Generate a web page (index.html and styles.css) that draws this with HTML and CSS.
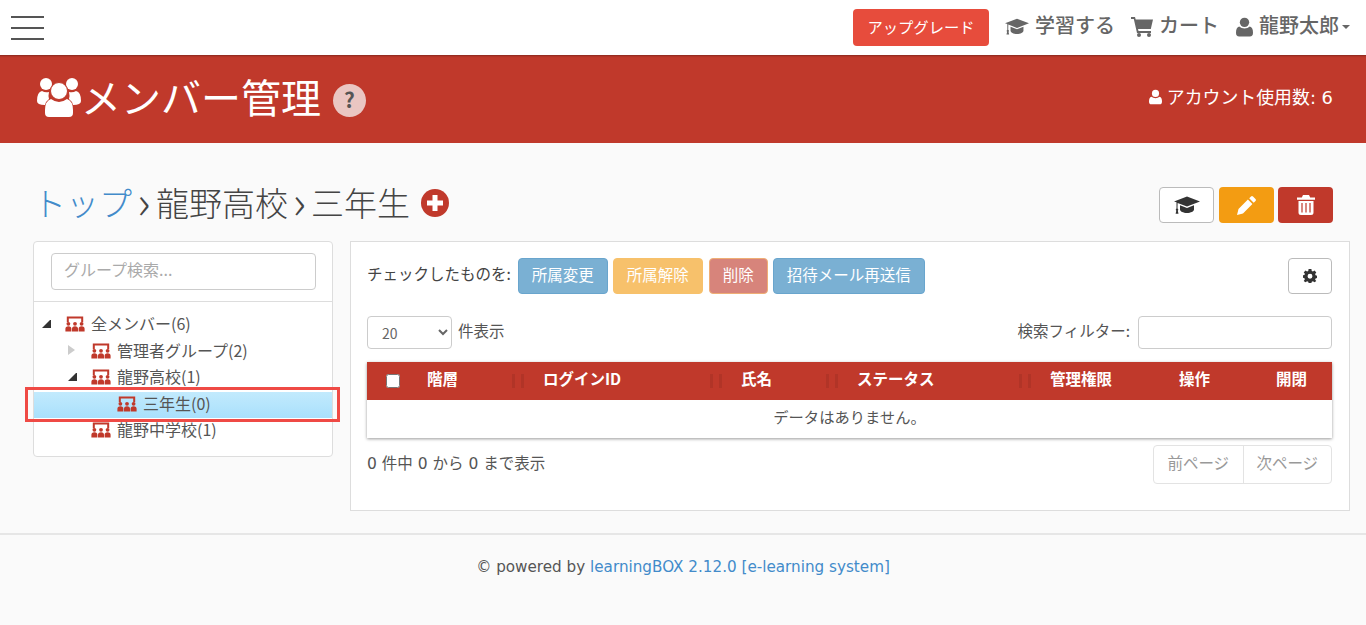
FILE: index.html
```html
<!DOCTYPE html>
<html lang="ja">
  <head>
    <meta charset="UTF-8" />
    <title>メンバー管理</title>
    <link rel="stylesheet" href="styles.css">
  </head>
  <body>
    <svg class="defs" width="0" height="0">
      <symbol id="i-group" viewBox="0 0 20 16">
        <path d="M1.800 6.200V.6h16.400v5.600h-2V2.600H3.800v3.600z" fill="currentColor"/>
        <g fill="currentColor">
          <circle cx="3.400" cy="7.800" r="1.900"/><circle cx="10" cy="7.800" r="1.900"/><circle cx="16.600" cy="7.800" r="1.900"/>
          <path d="M.4 15.600v-2.800q0-2.600 3-2.600t3 2.600v2.800zM7 15.600v-2.800q0-2.600 3-2.600t3 2.600v2.800zM13.600 15.600v-2.800q0-2.600 3-2.600t3 2.600v2.800z"/>
        </g>
      </symbol>
      <symbol id="i-cap" viewBox="0 0 26 18">
        <path d="M13 .5 26 5.500 13 10.500 3.600 6.900l-.1 5.600c.5.3.8.8.8 1.300 0 .4-.2.8-.5 1l.7 3H1.600l.7-3c-.3-.2-.5-.6-.5-1 0-.5.3-1 .7-1.300V6.300L0 5.500z" fill="currentColor"/>
        <path d="M6 9.300 13 12l7-2.700v4.200c0 1.800-3.200 3.500-7 3.500s-7-1.700-7-3.500z" fill="currentColor"/>
      </symbol>
      <symbol id="i-user" viewBox="0 0 16 18">
        <circle cx="8" cy="4.600" r="4.400" fill="currentColor"/>
        <path d="M3 8.600Q5 10.400 8 10.400T13 8.600Q16 9.300 16 14.500 16 18 13 18H3Q0 18 0 14.500 0 9.300 3 8.600z" fill="currentColor"/>
      </symbol>
    </svg>

    <header class="topbar">
      <div class="hamburger"><span></span><span></span><span></span></div>
      <nav class="topnav">
        <button class="upgrade">アップグレード</button>
        <a class="nav-item"><svg class="nav-cap"><use href="#i-cap"/></svg>学習する</a>
        <a class="nav-item">
          <svg class="nav-cart" viewBox="0 0 22 20"><path d="M0 0h4l.7 2.500H22l-2.200 9.500H7l.5 2H20v2H6L2.800 2H0z" fill="currentColor"/><circle cx="8" cy="18" r="2" fill="currentColor"/><circle cx="18" cy="18" r="2" fill="currentColor"/></svg>カート
        </a>
        <a class="nav-item"><svg class="nav-user"><use href="#i-user"/></svg>龍野太郎<i class="caret"></i></a>
      </nav>
    </header>

    <section class="page-head">
      <div class="page-title">
        <svg class="title-icon" viewBox="0 0 44 40">
          <g fill="#fff">
            <circle cx="9" cy="7" r="6"/><circle cx="35" cy="7" r="6"/>
            <path d="M0 24q0-9 5-10 3 2 7 1-1 4 0 7-3 2-4 6-8 0-8-4zM44 24q0-9-5-10-3 2-7 1 1 4 0 7 3 2 4 6 8 0 8-4z"/>
          </g>
          <circle cx="22" cy="14" r="8.500" fill="#fff" stroke="#c0392b"/>
          <path d="M14 22q4 3 8 3t8-3q6 2 6 11v3q0 4-4 4H12q-4 0-4-4v-3q0-9 6-11z" fill="#fff"/>
        </svg>
        <h1>メンバー管理</h1>
        <span class="help">?</span>
      </div>
      <div class="account-count">
        <svg class="count-icon"><use href="#i-user"/></svg>アカウント使用数: 6
      </div>
    </section>

    <main class="content">
      <div class="crumb-row">
        <div class="crumbs">
          <a class="crumb-link">トップ</a><span class="sep">›</span><span>龍野高校</span><span class="sep">›</span><span>三年生</span>
          <svg class="crumb-add" viewBox="0 0 28 28"><circle cx="14" cy="14" r="14" fill="#c0392b"/><path d="M11.500 6h5v5.500H22v5h-5.500V22h-5v-5.500H6v-5h5.500z" fill="#fff"/></svg>
        </div>
        <div class="crumb-actions">
          <button class="act act-white"><svg class="act-cap"><use href="#i-cap"/></svg></button>
          <button class="act act-orange">
            <svg class="act-icon" viewBox="0 0 20 20"><path d="M14 1.500q1-1 2 0l2.500 2.500q1 1 0 2l-1.800 1.800-4.500-4.500zM10.900 4.600l4.500 4.500L6 18.500 0 20l1.500-6z" fill="#fff"/></svg>
          </button>
          <button class="act act-red">
            <svg class="act-icon" viewBox="0 0 18 20"><path d="M6 0h6l1.200 2.500H18v2.300H0V2.500h4.800zM1.500 6h15v11.500q0 2.500-2.500 2.500H4q-2.500 0-2.500-2.500z" fill="#fff"/><path d="M5 8v9.500M9 8v9.500M13 8v9.500" stroke="#c0392b" stroke-width="1.200"/></svg>
          </button>
        </div>
      </div>

      <div class="columns">
        <aside class="tree-panel">
          <div class="tree-search">
            <input type="text" placeholder="グループ検索..." />
          </div>
          <ul class="tree">
            <li class="node lv0"><i class="tog open"></i><svg class="grp"><use href="#i-group"/></svg>全メンバー(6)</li>
            <li class="node lv1"><i class="tog closed"></i><svg class="grp"><use href="#i-group"/></svg>管理者グループ(2)</li>
            <li class="node lv1"><i class="tog open"></i><svg class="grp"><use href="#i-group"/></svg>龍野高校(1)</li>
            <li class="node lv2 selected"><i class="tog"></i><svg class="grp"><use href="#i-group"/></svg>三年生(0)<span class="callout"></span></li>
            <li class="node lv1"><i class="tog"></i><svg class="grp"><use href="#i-group"/></svg>龍野中学校(1)</li>
          </ul>
        </aside>

        <section class="list-panel">
          <div class="toolbar">
            <span class="toolbar-label">チェックしたものを:</span>
            <button class="btn blue">所属変更</button>
            <button class="btn orange">所属解除</button>
            <button class="btn red">削除</button>
            <button class="btn blue">招待メール再送信</button>
            <button class="btn-gear">
              <svg viewBox="0 0 20 20"><path fill-rule="evenodd" d="M8 0h4l.5 2.800 1.700.7L16.500 2 19 5l-1.700 2.200.6 1.700 2.100.6v3.500l-2.100.6-.6 1.700L19 17l-2.500 2-2.300-1.500-1.700.7-.5 1.800H8l-.5-1.800-1.700-.7L3.500 19 1 17l1.700-2.200-.6-1.700-2.100-.6V9l2.100-.6.6-1.700L1 5l2.500-3 2.300 1.500 1.700-.7zM10 6.800a3.500 3.500 0 1 0 0 7 3.500 3.500 0 0 0 0-7z" fill="#333"/></svg>
            </button>
          </div>

          <div class="filter-row">
            <label class="length">
              <select><option>20</option></select>
              件表示
            </label>
            <label class="filter">検索フィルター: <input type="text" /></label>
          </div>

          <div class="table-wrap">
            <table>
              <colgroup>
                <col class="c0"><col class="c1"><col class="c2"><col class="c3"><col class="c4"><col class="c5"><col class="c6"><col class="c7">
              </colgroup>
              <thead>
                <tr>
                  <th class="check"><input type="checkbox" /></th>
                  <th class="sort">階層</th>
                  <th class="sort">ログインID</th>
                  <th class="sort">氏名</th>
                  <th class="sort">ステータス</th>
                  <th>管理権限</th>
                  <th>操作</th>
                  <th>開閉</th>
                </tr>
              </thead>
              <tbody>
                <tr><td colspan="8">データはありません。</td></tr>
              </tbody>
            </table>
          </div>

          <div class="table-foot">
            <span class="info">0 件中 0 から 0 まで表示</span>
            <div class="pager"><a>前ページ</a><a>次ページ</a></div>
          </div>
        </section>
      </div>
    </main>

    <footer class="footer">
      © powered by <a>learningBOX 2.12.0 [e-learning system]</a>
    </footer>
  </body>
</html>
```

FILE: styles.css
```css
* {
  box-sizing: border-box;
}
html,
body {
  height: 625px;
  overflow: hidden;
}
body {
  margin: 0;
  font-family: "Noto Sans CJK JP", sans-serif;
  font-size: 15.500px;
  color: #555;
  background-color: #fafafa;
}
button {
  font-family: inherit;
}
.defs {
  position: absolute;
}
.topbar {
  height: 55px;
  background: #fff;
  display: flex;
  align-items: center;
  justify-content: space-between;
  padding: 0 16px 0 11px;
}
.hamburger {
  width: 33px;
  display: flex;
  flex-direction: column;
  gap: 9px;
}
.hamburger span {
  height: 2px;
  background: #555;
}
.topnav {
  display: flex;
  align-items: center;
}
.upgrade {
  width: 136px;
  height: 37px;
  margin-right: 16px;
  background: #e74c3c;
  border: none;
  border-radius: 4px;
  color: #fff;
  font-size: 15.300px;
  padding: 0 0 3px;
}
.nav-item {
  display: flex;
  align-items: center;
  color: #666;
  font-size: 20px;
  font-weight: 500;
  line-height: 30px;
  padding-bottom: 6px;
  margin-right: 17px;
}
.nav-item:last-child {
  margin-right: 0;
}
.upgrade + .nav-item {
  margin-right: 16px;
}
.nav-item svg {
  margin-top: 4px;
}
.nav-cap {
  width: 24px;
  height: 17px;
  margin-right: 6px;
}
.nav-cart {
  width: 22px;
  height: 20px;
  margin-right: 6px;
}
.nav-user {
  width: 17px;
  height: 20px;
  margin-right: 6px;
}
.caret {
  border-top: 4px solid #666;
  border-left: 4.500px solid transparent;
  border-right: 4.500px solid transparent;
  margin: 4px 0 0 3px;
}
.page-head {
  height: 88px;
  background: #c0392b;
  box-shadow: inset 0 3px 2px -2px rgba(0, 0, 0, 0.3);
  color: #fff;
  display: flex;
  align-items: center;
  justify-content: space-between;
  padding: 0 33px 4px 37px;
}
.page-title {
  display: flex;
  align-items: center;
}
.title-icon {
  width: 44px;
  height: 40px;
}
h1 {
  margin: 0;
  font-size: 40px;
  font-weight: 400;
  line-height: 50px;
  padding-bottom: 2px;
}
.help {
  width: 33px;
  height: 33px;
  margin: 6px 0 0 12px;
  border-radius: 50%;
  background: #eac6c2;
  color: #555;
  font-size: 21px;
  font-weight: 700;
  text-align: center;
  line-height: 31px;
}
.account-count {
  display: flex;
  align-items: center;
  font-family: "DejaVu Sans", "Noto Sans CJK JP", sans-serif;
  font-size: 17.900px;
  padding-bottom: 2px;
}
.count-icon {
  width: 13px;
  height: 16px;
  margin: 2px 5px 0 0;
  color: #fff;
}
.content {
  height: 392px;
  border-bottom: 2px solid #e6e6e6;
  padding: 44px 16px 0 33px;
}
.crumb-row {
  display: flex;
  align-items: center;
  justify-content: space-between;
  height: 36px;
  margin-bottom: 18px;
}
.crumbs {
  display: flex;
  align-items: center;
  font-size: 33px;
  line-height: 36px;
  font-weight: 300;
  color: #444;
  padding-bottom: 6px;
}
.crumb-link {
  color: #428bca;
}
.sep {
  width: 24px;
  text-align: center;
  font-size: 46px;
  padding-bottom: 6px;
}
.sep + span + .sep {
  width: 23px;
}
.crumb-add {
  width: 28px;
  height: 28px;
  margin-left: 11px;
  margin-top: 2px;
}
.crumb-actions {
  display: flex;
  gap: 4px;
  margin-right: 17px;
}
.act {
  width: 55px;
  height: 36px;
  border-radius: 4px;
  border: 1px solid transparent;
  display: flex;
  align-items: center;
  justify-content: center;
  padding: 0;
}
.act-white {
  background: #fff;
  border-color: #bbb;
  color: #333;
  margin-right: 1px;
}
.act-orange {
  background: #f39c12;
}
.act-red {
  background: #c0392b;
}
.act-cap {
  width: 26px;
  height: 18px;
}
.act-icon {
  width: 20px;
  height: 20px;
}
.columns {
  display: flex;
  align-items: flex-start;
  gap: 17px;
}
.tree-panel {
  width: 300px;
  height: 216px;
  background: #fff;
  border: 1px solid #ddd;
  border-radius: 4px;
}
.tree-search {
  height: 60px;
  padding: 11px 16px 0 17px;
  border-bottom: 1px solid #ddd;
}
.tree-search input {
  width: 100%;
  height: 37px;
  border: 1px solid #ccc;
  border-radius: 4px;
  padding: 0 12px 5px;
  font-family: inherit;
  font-size: 16px;
}
.tree-search input::placeholder {
  color: #aaa;
}
.tree {
  list-style: none;
  margin: 0;
  padding: 10px 0 0;
}
.node {
  position: relative;
  height: 26.500px;
  display: flex;
  align-items: center;
  font-size: 16px;
  color: #555;
  white-space: nowrap;
  padding-bottom: 4px;
}
.lv0 {
  padding-left: 8px;
}
.lv1 {
  padding-left: 34px;
}
.lv2 {
  padding-left: 60px;
}
.tog {
  width: 9px;
  height: 9px;
  margin-right: 14px;
  flex: none;
}
.tog.open {
  border-style: solid;
  border-width: 0 0 8px 8px;
  border-color: transparent transparent #333 transparent;
}
.tog.closed {
  border-style: solid;
  border-width: 5px 0 5px 7px;
  border-color: transparent transparent transparent #ccc;
}
.grp {
  width: 20px;
  height: 16px;
  margin: 2px 6px 0 0;
  color: #c0392b;
  flex: none;
}
.selected {
  background: linear-gradient(#c2eafd, #a9e0fc);
}
.callout {
  position: absolute;
  left: -9px;
  right: -8px;
  top: -5px;
  bottom: -4px;
  border: 3px solid #ef4a45;
}
.list-panel {
  width: 1000px;
  height: 270px;
  background: #fff;
  border: 1px solid #ddd;
  padding: 16px 17px 0 16px;
}
.toolbar {
  display: flex;
  align-items: center;
  height: 36px;
}
.toolbar-label {
  margin-right: 7px;
  font-size: 15.500px;
  color: #444;
  padding-bottom: 6px;
}
.btn {
  height: 36px;
  padding: 0 13px 5px;
  margin-right: 5px;
  border-radius: 4px;
  border: 1px solid;
  color: #fff;
  font-size: 15.500px;
  opacity: 0.62;
}
.btn.blue {
  background: #2980b9;
  border-color: #0e6fb0;
}
.btn.orange {
  background: #f39c12;
  border-color: #f39c12;
}
.btn.red {
  background: #c0392b;
  border-color: #e67e22;
  margin-left: 1px;
}
.btn-gear {
  width: 44px;
  height: 36px;
  margin-left: auto;
  background: #fff;
  border: 1px solid #bbb;
  border-radius: 4px;
  display: flex;
  align-items: center;
  justify-content: center;
  padding: 0;
}
.btn-gear svg {
  width: 14px;
  height: 14px;
}
.filter-row {
  display: flex;
  justify-content: space-between;
  align-items: center;
  height: 33px;
  margin-top: 22px;
}
.length,
.filter {
  display: flex;
  align-items: center;
  font-size: 15.500px;
  line-height: 26px;
  color: #555;
}
.length select {
  width: 85px;
  height: 33px;
  margin: 5px 6px 0 0;
  padding-left: 10px;
  background: #fff;
  border: 1px solid #ccc;
  border-radius: 4px;
  color: #666;
  font-family: inherit;
  font-size: 14px;
}
.filter input {
  width: 194px;
  height: 33px;
  margin: 5px 0 0 8px;
  border: 1px solid #ccc;
  border-radius: 4px;
}
.filter-row label {
  padding-bottom: 5px;
}
.table-wrap {
  margin-top: 13px;
  box-shadow: 0 1px 3px rgba(0, 0, 0, 0.4);
}
table {
  width: 965px;
  table-layout: fixed;
  border-collapse: collapse;
}
.c0 { width: 45px; }
.c1 { width: 116px; }
.c2 { width: 198px; }
.c3 { width: 116px; }
.c4 { width: 193px; }
.c5 { width: 129px; }
.c6 { width: 97px; }
.c7 { width: 71px; }
th {
  height: 38px;
  padding: 0 0 6px 15px;
  background: #c0392b;
  color: #fff;
  font-size: 15.500px;
  font-weight: 700;
  text-align: left;
}
th.check {
  padding: 0 0 0 19px;
}
th.check input {
  display: block;
  width: 14px;
  height: 14px;
  margin: 0;
}
th.sort {
  position: relative;
}
/* faint sort arrows, sit over the header cell */
th.sort::after {
  content: "";
  position: absolute;
  right: 4px;
  top: 12px;
  width: 6px;
  height: 14px;
  border-left: 3px solid rgba(0, 0, 0, 0.08);
  border-right: 3px solid rgba(0, 0, 0, 0.08);
}
td {
  height: 38px;
  padding: 0 0 6px;
  text-align: center;
  font-size: 15.300px;
  color: #555;
}
.table-foot {
  display: flex;
  justify-content: space-between;
  align-items: flex-start;
  margin-top: 7px;
}
.info {
  margin-top: 6px;
  font-family: "DejaVu Sans", "Noto Sans CJK JP", sans-serif;
  font-size: 15.500px;
  color: #555;
}
.pager {
  display: flex;
  height: 39px;
  border: 1px solid #e3e3e3;
  border-radius: 4px;
}
.pager a {
  width: 88.500px;
  display: flex;
  align-items: center;
  justify-content: center;
  font-size: 15.500px;
  padding-bottom: 6px;
  color: #999;
}
.pager a + a {
  border-left: 1px solid #e3e3e3;
}
.footer {
  padding-top: 23px;
  text-align: center;
  font-family: "DejaVu Sans", sans-serif;
  font-size: 15.200px;
  color: #555;
}
.footer a {
  color: #428bca;
}
```
